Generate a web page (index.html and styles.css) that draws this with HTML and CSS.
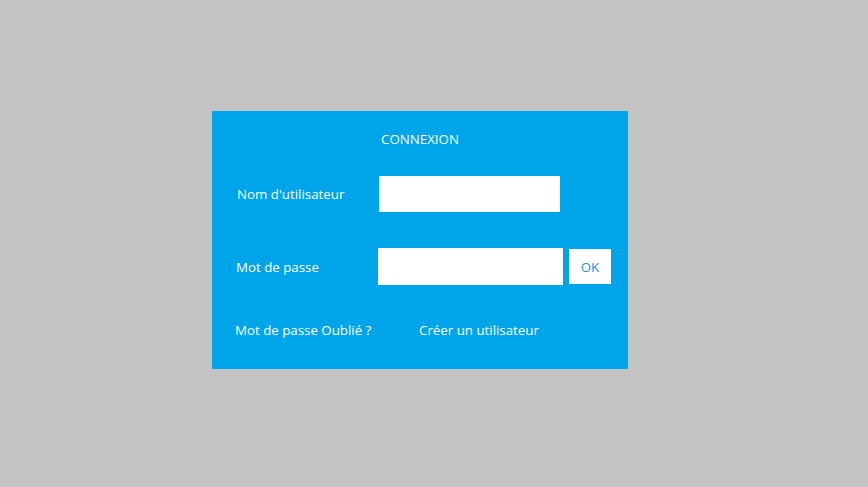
FILE: index.html
```html
<!DOCTYPE html>
<html lang="fr">
<head>
<meta charset="utf-8">
<title>Connexion</title>
<link rel="stylesheet" href="styles.css">
</head>
<body>
<div class="page">
  <form class="panel">
    <div class="title">CONNEXION</div>
    <div class="row row-user">
      <span class="label">Nom d'utilisateur</span>
      <input class="field field-user" type="text">
    </div>
    <div class="row row-pass">
      <span class="label">Mot de passe</span>
      <input class="field field-pass" type="password">
      <button class="ok" type="button">OK</button>
    </div>
    <div class="row row-links">
      <span class="link link-forgot">Mot de passe Oublié ?</span>
      <span class="link">Créer un utilisateur</span>
    </div>
  </form>
</div>
</body>
</html>
```

FILE: styles.css
```css
html, body {
  margin: 0;
  padding: 0;
  background: #c3c3c3;
}
body {
  font-family: "Open Sans", "Noto Sans", sans-serif;
  font-size: 13.3px;
  color: #ffffff;
}
.page {
  padding: 111px 0 0 212px;
}
.panel {
  width: 416px;
  height: 258px;
  margin: 0;
  background: #00a4e8;
  box-sizing: border-box;
  padding-top: 19px;
  display: flex;
  flex-direction: column;
}
.title {
  height: 18px;
  line-height: 18px;
  text-align: center;
}
.row {
  display: flex;
  align-items: center;
}
.label {
  line-height: 18px;
  width: 142px;
  flex: none;
}
.row-user {
  margin-top: 28px;
  padding-left: 25px;
}
.row-user .label {
  margin-top: -1px;
}
.row-pass {
  margin-top: 36px;
  padding-left: 24px;
}
.field {
  border: none;
  outline: none;
  background: #ffffff;
  margin: 0;
  padding: 0;
  box-sizing: border-box;
}
.field-user {
  width: 181px;
  height: 36px;
}
.field-pass {
  width: 185px;
  height: 37px;
}
.ok {
  margin: 0 0 0 6px;
  width: 42px;
  height: 35px;
  border: none;
  padding: 0;
  background: #ffffff;
  color: #2b8fe3;
  font-family: inherit;
  font-size: 13.3px;
}
.row-links {
  margin-top: 36px;
  padding-left: 23px;
  line-height: 18px;
}
.link-forgot {
  width: 184px;
}
```
